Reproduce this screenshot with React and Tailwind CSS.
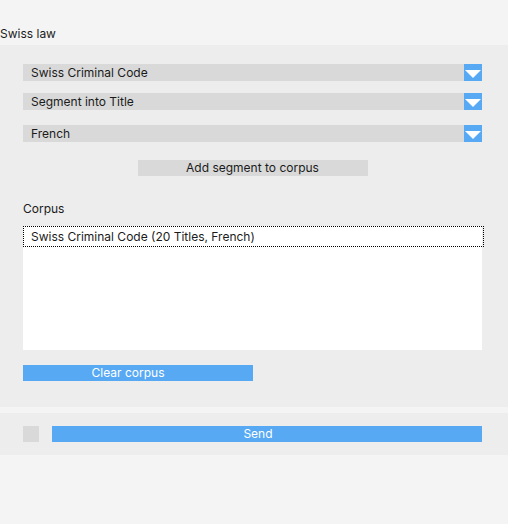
import React from "react";

const Arrow = () => (
  <div className="w-[18px] h-[17px] bg-[#57a9f4] flex items-start justify-center pt-[6px]">
    <svg width="16" height="8" viewBox="0 0 16 8">
      <polygon points="0,0 16,0 8,8" fill="#ffffff" />
    </svg>
  </div>
);

const Select = ({ label, className = "" }) => (
  <div className={"flex h-[17px] " + className}>
    <div className="flex-1 bg-[#d9d9d9] pl-[8px] flex items-center leading-[17px]">{label}</div>
    <Arrow />
  </div>
);

export default function App() {
  return (
    <div
      className="w-[508px] h-[524px] bg-[#f4f4f4] text-[12px] text-[#1b1b1b]"
      style={{ fontFamily: "Inter, 'Liberation Sans', sans-serif" }}
    >
      <div className="h-[45px] pt-[26px] leading-[16px]">Swiss law</div>

      <div className="bg-[#ededed] pl-[23px] pr-[26px] pt-[19px] pb-[26px] h-[362px] flex flex-col">
        <Select label="Swiss Criminal Code" />
        <Select label="Segment into Title" className="mt-[12px]" />
        <Select label="French" className="mt-[15px]" />

        <div className="mt-[18px] flex justify-center">
          <div className="w-[230px] h-[16px] bg-[#d9d9d9] flex items-center justify-center leading-[16px]">
            Add segment to corpus
          </div>
        </div>

        <div className="mt-[25px] leading-[16px]">Corpus</div>

        <div className="mt-[9px] h-[124px] w-[459px] bg-white">
          <div className="w-[461px] h-[21px] border border-dotted border-black pl-[7px] flex items-center leading-[16px]">
            Swiss Criminal Code (20 Titles, French)
          </div>
        </div>

        <div className="mt-[15px] w-[230px] h-[16px] bg-[#57a9f4] text-white flex items-center justify-center pr-[20px] leading-[16px]">
          Clear corpus
        </div>
      </div>

      <div className="mt-[6px] bg-[#ededed] pl-[23px] pr-[26px] py-[13px] h-[42px] flex items-center gap-[13px]">
        <div className="w-[16px] h-[16px] bg-[#d9d9d9]" />
        <div className="flex-1 h-[16px] bg-[#57a9f4] text-white flex items-center justify-center pr-[18px] leading-[16px]">
          Send
        </div>
      </div>
    </div>
  );
}
